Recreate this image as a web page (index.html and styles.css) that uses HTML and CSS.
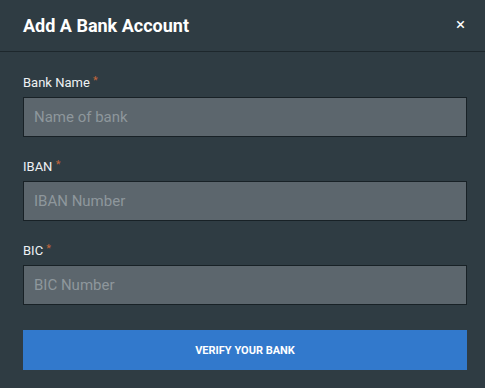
FILE: index.html
```html
<!DOCTYPE html>
<html>
<head>
<meta charset="utf-8">
<link rel="stylesheet" href="styles.css">
</head>
<body>
<div class="modal">
  <div class="modal-header">
    <h1 class="title">Add A Bank Account</h1>
    <span class="close">×</span>
  </div>
  <form class="modal-body">
    <div class="field">
      <label class="label">Bank Name <span class="req">*</span></label>
      <input class="input" type="text" placeholder="Name of bank">
    </div>
    <div class="field">
      <label class="label">IBAN <span class="req">*</span></label>
      <input class="input" type="text" placeholder="IBAN Number">
    </div>
    <div class="field">
      <label class="label">BIC <span class="req">*</span></label>
      <input class="input" type="text" placeholder="BIC Number">
    </div>
    <button class="btn" type="button">VERIFY YOUR BANK</button>
  </form>
</div>
</body>
</html>
```
FILE: styles.css
```css
html, body {
  margin: 0;
  padding: 0;
  background: #2f3c43;
  font-family: Roboto, "Liberation Sans", sans-serif;
  color: #e9eef0;
}
.modal {
  width: 485px;
  height: 388px;
}
.modal-header {
  height: 51px;
  display: flex;
  align-items: center;
  justify-content: space-between;
  padding: 0 20px 0 23px;
  border-bottom: 1px solid #1d272c;
  box-sizing: content-box;
}
.title {
  margin: 0;
  font-size: 18px;
  font-weight: 700;
  color: #ffffff;
  letter-spacing: 0;
}
.close {
  font-size: 17px;
  color: #ffffff;
  line-height: 1;
  margin-top: -2px;
}
.modal-body {
  padding: 23px 18px 0 23px;
  display: flex;
  flex-direction: column;
}
.field {
  display: flex;
  flex-direction: column;
  margin-bottom: 22px;
}
.field:last-of-type {
  margin-bottom: 25px;
}
.label {
  font-size: 13px;
  line-height: 16px;
  height: 16px;
  color: #eef2f4;
  margin-bottom: 6px;
}
.req {
  color: #c2653c;
  font-size: 11px;
  line-height: 0;
  vertical-align: 3px;
}
.input {
  box-sizing: border-box;
  height: 40px;
  width: 444px;
  margin: 0;
  padding: 0 10px;
  background: #5c666d;
  border: 1px solid #182126;
  font-family: Roboto, "Liberation Sans", sans-serif;
  font-size: 15px;
  color: #e0e4e6;
  outline: none;
}
.input::placeholder {
  color: #8e979c;
}
.btn {
  width: 444px;
  height: 40px;
  border: none;
  background: #3279cc;
  color: #ffffff;
  font-family: Roboto, "Liberation Sans", sans-serif;
  font-size: 11px;
  font-weight: 700;
  letter-spacing: 0;
  padding: 0;
}
```
